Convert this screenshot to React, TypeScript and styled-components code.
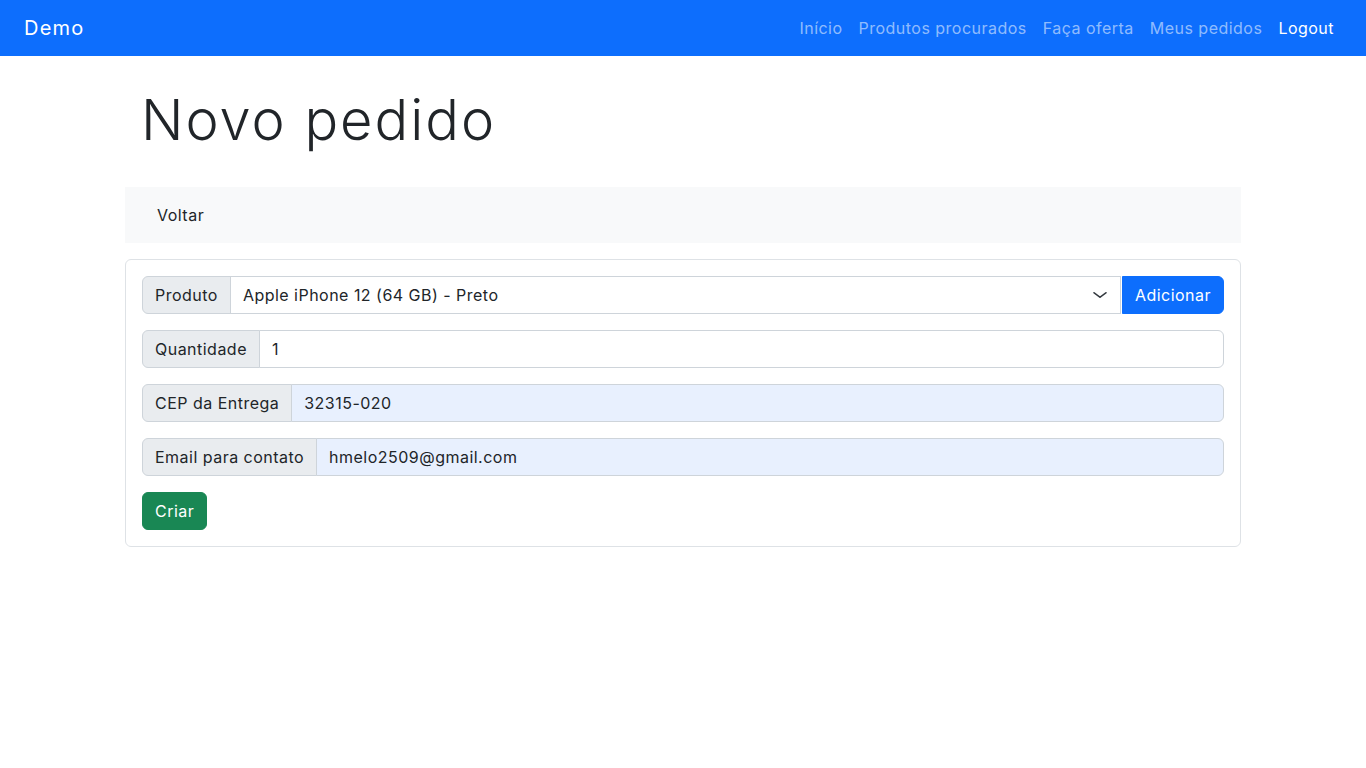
import React from "react";
import styled, { createGlobalStyle } from "styled-components";

const GlobalStyle = createGlobalStyle`
  * { box-sizing: border-box; }
  body {
    margin: 0;
    font-family: Inter, "Noto Sans", sans-serif;
    color: #212529;
    background: #fff;
    font-size: 16px;
    line-height: 1.5;
    letter-spacing: 0.03em;
  }
`;

const Navbar = styled.nav`
  display: flex;
  align-items: center;
  justify-content: space-between;
  height: 56px;
  padding: 0 24px 1px;
  background: #0d6efd;
`;

const Brand = styled.a`
  font-size: 20px;
  color: #fff;
  text-decoration: none;
  letter-spacing: 0.06em;
`;

const NavList = styled.div`
  display: flex;
  align-items: center;
`;

const NavLink = styled.a<{ $active?: boolean }>`
  padding: 8px;
  font-size: 16px;
  color: ${(p) => (p.$active ? "#fff" : "rgba(255,255,255,0.55)")};
  text-decoration: none;
`;

const Container = styled.main`
  max-width: 1140px;
  margin: 0 auto;
  padding: 0 12px;
`;

const Title = styled.h1`
  margin: 31px 0 33px;
  padding-left: 16px;
  font-size: 56px;
  font-weight: 300;
  line-height: 1.2;
  letter-spacing: 0.035em;
`;

const SubBar = styled.div`
  display: flex;
  align-items: center;
  height: 56px;
  padding: 0 0 1px 32px;
  background: #f8f9fa;
`;

const SubLink = styled.a`
  color: #212529;
  text-decoration: none;
  font-size: 16px;
`;

const Card = styled.form`
  margin-top: 16px;
  border: 1px solid #dee2e6;
  border-radius: 6px;
  padding: 16px;
  display: flex;
  flex-direction: column;
  gap: 16px;
`;

const InputGroup = styled.div`
  display: flex;
  height: 38px;
`;

const Addon = styled.span`
  display: flex;
  align-items: center;
  padding: 0 12px;
  background: #e9ecef;
  border: 1px solid #ced4da;
  border-radius: 6px 0 0 6px;
  white-space: nowrap;
  font-size: 16px;
`;

const Field = styled.div<{ $autofill?: boolean; $last?: boolean }>`
  flex: 1;
  display: flex;
  align-items: center;
  padding: 0 12px;
  margin-left: -1px;
  border: 1px solid #ced4da;
  border-radius: ${(p) => (p.$last ? "0 6px 6px 0" : "0")};
  background: ${(p) => (p.$autofill ? "#e8f0fe" : "#fff")};
  font-size: 16px;
  position: relative;
`;

const Chevron = styled.svg`
  position: absolute;
  right: 12px;
  top: 50%;
  margin-top: -6px;
  width: 16px;
  height: 12px;
`;

const Button = styled.button<{ $variant: "primary" | "success" }>`
  height: 38px;
  padding: 0 12px;
  border: 1px solid ${(p) => (p.$variant === "primary" ? "#0d6efd" : "#198754")};
  background: ${(p) => (p.$variant === "primary" ? "#0d6efd" : "#198754")};
  color: #fff;
  font-family: inherit;
  font-size: 16px;
  letter-spacing: 0.03em;
  border-radius: 6px;
  cursor: pointer;
`;

const AttachedButton = styled(Button)`
  margin-left: 1px;
  border-radius: 0 6px 6px 0;
`;

const Actions = styled.div`
  display: flex;
`;

export default function App() {
  return (
    <>
      <GlobalStyle />
      <Navbar>
        <Brand href="#">Demo</Brand>
        <NavList>
          <NavLink href="#">Início</NavLink>
          <NavLink href="#">Produtos procurados</NavLink>
          <NavLink href="#">Faça oferta</NavLink>
          <NavLink href="#">Meus pedidos</NavLink>
          <NavLink href="#" $active>
            Logout
          </NavLink>
        </NavList>
      </Navbar>
      <Container>
        <Title>Novo pedido</Title>
        <SubBar>
          <SubLink href="#">Voltar</SubLink>
        </SubBar>
        <Card onSubmit={(e) => e.preventDefault()}>
          <InputGroup>
            <Addon>Produto</Addon>
            <Field>
              Apple iPhone 12 (64 GB) - Preto
              <Chevron viewBox="0 0 16 16" preserveAspectRatio="none">
                <path
                  d="m2 5 6 6 6-6"
                  fill="none"
                  stroke="#343a40"
                  strokeWidth="1.7"
                  strokeLinecap="round"
                  strokeLinejoin="round"
                />
              </Chevron>
            </Field>
            <AttachedButton type="button" $variant="primary">
              Adicionar
            </AttachedButton>
          </InputGroup>
          <InputGroup>
            <Addon>Quantidade</Addon>
            <Field $last>1</Field>
          </InputGroup>
          <InputGroup>
            <Addon>CEP da Entrega</Addon>
            <Field $last $autofill>
              32315-020
            </Field>
          </InputGroup>
          <InputGroup>
            <Addon>Email para contato</Addon>
            <Field $last $autofill>
              hmelo2509@gmail.com
            </Field>
          </InputGroup>
          <Actions>
            <Button type="submit" $variant="success">
              Criar
            </Button>
          </Actions>
        </Card>
      </Container>
    </>
  );
}
